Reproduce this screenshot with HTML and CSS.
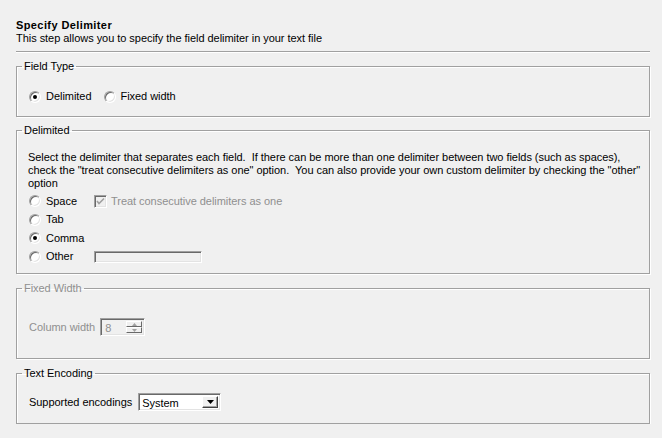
FILE: index.html
```html
<!DOCTYPE html>
<html>
<head>
<meta charset="utf-8">
<link rel="stylesheet" href="styles.css">
</head>
<body>
<div class="page">
  <div class="header">
    <div class="title">Specify Delimiter</div>
    <div class="subtitle">This step allows you to specify the field delimiter in your text file</div>
  </div>
  <div class="sep"></div>

  <fieldset class="group g-type">
    <legend>Field Type</legend>
    <div class="inner row">
      <label class="opt opt-first"><span class="radio checked"></span>Delimited</label>
      <label class="opt"><span class="radio"></span>Fixed width</label>
    </div>
  </fieldset>

  <fieldset class="group g-delim">
    <legend>Delimited</legend>
    <div class="inner">
      <div class="desc">Select the delimiter that separates each field.&nbsp; If there can be more than one delimiter between two fields (such as spaces),<br>check the "treat consecutive delimiters as one" option.&nbsp; You can also provide your own custom delimiter by checking the "other"<br>option</div>
      <div class="choices">
        <div class="crow">
          <label class="opt opt-col"><span class="radio"></span>Space</label>
          <label class="chk disabled"><span class="checkbox"><svg width="9" height="9" viewBox="0 0 9 9"><path d="M1 4 L3 6.5 L8 1.5" fill="none" stroke="#a0a0a0" stroke-width="1.6"/></svg></span>Treat consecutive delimiters as one</label>
        </div>
        <div class="crow">
          <label class="opt opt-col"><span class="radio"></span>Tab</label>
        </div>
        <div class="crow">
          <label class="opt opt-col"><span class="radio checked"></span>Comma</label>
        </div>
        <div class="crow">
          <label class="opt opt-col"><span class="radio"></span>Other</label>
          <span class="textbox"></span>
        </div>
      </div>
    </div>
  </fieldset>

  <fieldset class="group g-fixed disabled">
    <legend>Fixed Width</legend>
    <div class="inner row">
      <span class="lbl">Column width</span>
      <span class="spinner">
        <span class="spin-val">8</span>
        <span class="spin-btns">
          <span class="spin-btn"><svg width="5" height="3" viewBox="0 0 5 3"><path d="M2.5 0 L5 3 L0 3 Z" fill="#a0a0a0"/></svg></span>
          <span class="spin-btn"><svg width="5" height="3" viewBox="0 0 5 3"><path d="M0 0 L5 0 L2.5 3 Z" fill="#a0a0a0"/></svg></span>
        </span>
      </span>
    </div>
  </fieldset>

  <fieldset class="group g-enc">
    <legend>Text Encoding</legend>
    <div class="inner row">
      <span class="lbl lbl-enc">Supported encodings</span>
      <span class="select">
        <span class="sel-val">System</span>
        <span class="sel-btn"><svg width="7" height="4" viewBox="0 0 7 4"><path d="M0 0 L7 0 L3.5 4 Z" fill="#000"/></svg></span>
      </span>
    </div>
  </fieldset>
</div>
</body>
</html>
```

FILE: styles.css
```css
html, body {
  margin: 0;
  background: #f0f0f0;
}
body {
  font-family: "Liberation Sans", Arial, sans-serif;
  font-size: 11px;
  line-height: 13px;
  letter-spacing: -0.04px;
  color: #000;
}
.page {
  padding: 19px 12px 0 16px;
}
.title {
  font-weight: bold;
  letter-spacing: 0.4px;
}
.sep {
  margin-top: 6px;
  height: 1px;
  background: #a0a0a0;
  box-shadow: 0 1px 0 #fff;
}
.group {
  margin: 8px 0 0 0;
  padding: 0;
  border: 1px solid #a0a0a0;
  box-shadow: 1px 1px 0 #fff, inset 1px 1px 0 #fff;
  min-width: 0;
}
.group legend {
  margin-left: 5px;
  padding: 0 2px;
  line-height: 13px;
}
.inner {
  padding-left: 11px;
}
.row {
  display: flex;
  align-items: center;
}
.g-type .inner {
  padding-top: 17px;
  padding-bottom: 13px;
}
.g-delim {
  margin-top: 7px;
}
.g-delim .inner {
  padding-top: 14px;
  padding-bottom: 7px;
}
.desc {
  white-space: nowrap;
}
.choices {
  margin-top: 2px;
}
.crow {
  display: flex;
  align-items: center;
  height: 18.5px;
}
.opt {
  display: inline-flex;
  align-items: center;
  gap: 5px;
  padding-left: 1px;
}
.opt-first {
  margin-right: 11px;
}
.opt-col {
  width: 65px;
}
.radio {
  position: relative;
  width: 12px;
  height: 12px;
  box-sizing: border-box;
  border-radius: 50%;
  border: 1px solid;
  border-color: #a0a0a0 #fff #fff #a0a0a0;
  background: #fff;
  box-shadow: inset 1px 1px 0 #696969, inset -1px -1px 0 #e3e3e3;
  flex: none;
}
.radio.checked::after {
  content: "";
  position: absolute;
  left: 3px;
  top: 3px;
  width: 4px;
  height: 4px;
  border-radius: 50%;
  background: #000;
}
.chk {
  display: inline-flex;
  align-items: center;
  gap: 4px;
}
.disabled, .disabled legend {
  color: #8f8f8f;
}
.checkbox {
  width: 13px;
  height: 13px;
  box-sizing: border-box;
  border: 1px solid;
  border-color: #a0a0a0 #fff #fff #a0a0a0;
  box-shadow: inset 1px 1px 0 #696969, inset -1px -1px 0 #e3e3e3;
  background: #f0f0f0;
  display: flex;
  align-items: center;
  justify-content: center;
  flex: none;
}
.textbox {
  width: 108px;
  height: 12px;
  box-sizing: border-box;
  border: 1px solid;
  border-color: #a0a0a0 #fff #fff #a0a0a0;
  box-shadow: inset 1px 1px 0 #696969, inset -1px -1px 0 #e3e3e3;
  background: #f0f0f0;
}
.g-fixed .inner {
  padding-top: 23px;
  padding-bottom: 22px;
}
.lbl {
  padding-left: 1px;
  margin-right: 5px;
}
.spinner {
  display: flex;
  width: 45px;
  height: 18px;
  box-sizing: border-box;
  border: 1px solid;
  border-color: #a0a0a0 #fff #fff #a0a0a0;
  box-shadow: inset 1px 1px 0 #696969, inset -1px -1px 0 #e3e3e3;
  background: #f0f0f0;
  padding: 2px;
}
.spin-val {
  flex: 1;
  padding-left: 2px;
  line-height: 14px;
  color: #8f8f8f;
}
.spin-btns {
  display: flex;
  flex-direction: column;
  width: 16px;
}
.spin-btn {
  flex: 1;
  display: flex;
  align-items: center;
  justify-content: center;
  box-sizing: border-box;
  border: 1px solid;
  border-color: #fff #696969 #696969 #fff;
  background: #f0f0f0;
}
.g-enc .inner {
  padding-top: 13px;
  padding-bottom: 12px;
}
.lbl-enc {
  margin-right: 6px;
}
.select {
  display: flex;
  width: 83px;
  height: 18px;
  box-sizing: border-box;
  border: 1px solid;
  border-color: #a0a0a0 #fff #fff #a0a0a0;
  box-shadow: inset 1px 1px 0 #696969, inset -1px -1px 0 #e3e3e3;
  background: #fff;
  padding: 2px;
}
.sel-val {
  flex: 1;
  padding-left: 1px;
  line-height: 14px;
}
.sel-btn {
  width: 16px;
  display: flex;
  align-items: center;
  justify-content: center;
  box-sizing: border-box;
  border: 1px solid;
  border-color: #fff #404040 #404040 #fff;
  box-shadow: inset -1px -1px 0 #a0a0a0;
  background: #f0f0f0;
}
```
